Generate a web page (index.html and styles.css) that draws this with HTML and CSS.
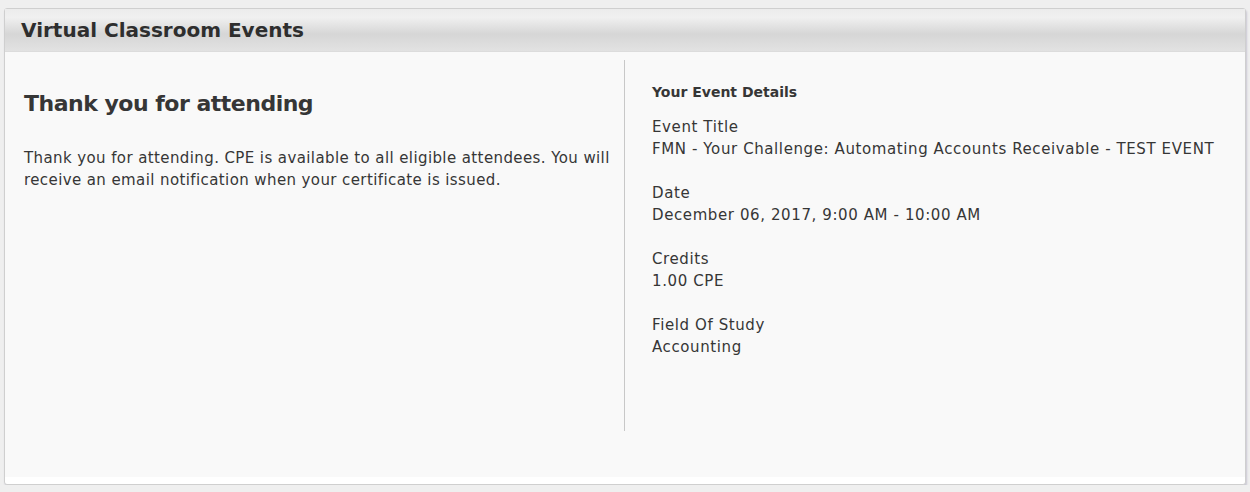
FILE: index.html
```html
<!DOCTYPE html>
<html lang="en">
<head>
  <meta charset="UTF-8">
  <meta name="viewport" content="width=device-width, initial-scale=1.0">
  <title>Virtual Classroom Events</title>
  <link rel="stylesheet" href="styles.css">
</head>
<body>
  <div class="panel">
    <div class="panel-header">Virtual Classroom Events</div>
    <div class="panel-body">
      <div class="col-left">
        <h2>Thank you for attending</h2>
        <p>Thank you for attending. CPE is available to all eligible attendees. You will receive an email notification when your certificate is issued.</p>
      </div>
      <div class="col-right">
        <h4>Your Event Details</h4>
        <div class="detail">
          <div>Event Title</div>
          <div>FMN - Your Challenge: Automating Accounts Receivable - TEST EVENT</div>
        </div>
        <div class="detail">
          <div>Date</div>
          <div>December 06, 2017, 9:00 AM - 10:00 AM</div>
        </div>
        <div class="detail">
          <div>Credits</div>
          <div>1.00 CPE</div>
        </div>
        <div class="detail">
          <div>Field Of Study</div>
          <div>Accounting</div>
        </div>
      </div>
    </div>
    <div class="panel-foot"></div>
  </div>
</body>
</html>
```

FILE: styles.css
```css
:root {
  --page-bg: #efefef;
  --body-bg: #f9f9f9;
  --text-color: #363636;
  --line-color: #c8c8c8;
}

body {
  font-family: 'DejaVu Sans', sans-serif;
  background-color: var(--page-bg);
  color: var(--text-color);
  margin: 0;
  padding: 8px 4px 0 4px;
}

.panel {
  border: 1px solid #cfcfcf;
  border-radius: 3px;
  background: #fff;
  box-shadow: 1px 2px 2px #c9c7d3;
}

.panel-header {
  height: 42px;
  line-height: 42px;
  padding: 0 16px;
  font-size: 20px;
  font-weight: 700;
  color: #2e2e2e;
  border-bottom: 1px solid #dcdcdc;
  background: linear-gradient(#ececec, #f0f0f0 20%, #d6d6d6 60%, #e2e2e2);
}

.panel-body {
  display: flex;
  background: var(--body-bg);
  padding: 8px 0 46px 0;
}

.panel-foot {
  height: 7px;
}

.col-left {
  width: 620px;
  height: 371px;
  box-sizing: border-box;
  padding: 20px 0 0 19px;
  border-right: 1px solid var(--line-color);
}

.col-left h2 {
  margin: 0 0 19px 0;
  font-size: 22px;
  font-weight: 700;
  letter-spacing: -0.5px;
  line-height: 48px;
}

.col-left p {
  margin: 0;
  font-size: 15px;
  letter-spacing: 0.4px;
  line-height: 22px;
}

.col-right {
  padding: 21px 0 0 27px;
  font-size: 15px;
  letter-spacing: 0.6px;
  line-height: 22px;
}

.col-right h4 {
  margin: 0 0 13px 0;
  font-size: 14px;
  font-weight: 700;
  letter-spacing: 0;
}

.detail {
  margin-bottom: 22px;
}
```
